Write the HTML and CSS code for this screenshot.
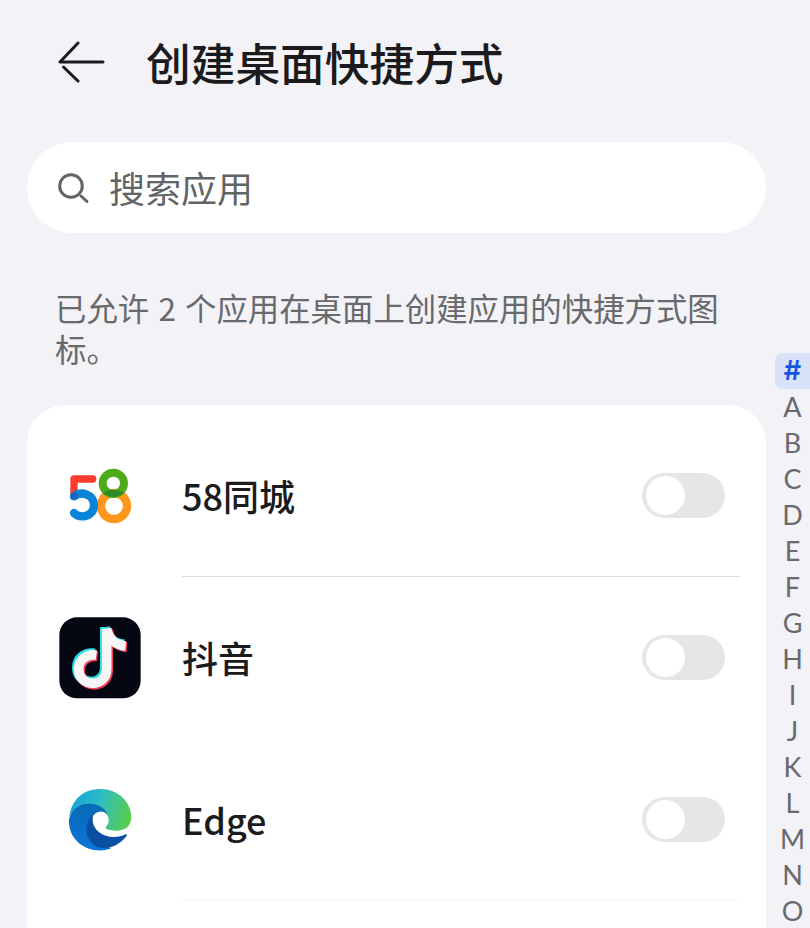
FILE: index.html
```
<!DOCTYPE html>
<html lang="zh-CN">
<head>
    <meta charset="UTF-8">
    <meta name="viewport" content="width=device-width, initial-scale=1.0">
    <title>创建桌面快捷方式</title>
    <link rel="stylesheet" href="styles.css">
</head>
<body>
    <div class="page">
        <div class="header">
            <svg class="back" viewBox="0 0 48 44" width="48" height="44">
                <path d="M20 2 L2 21 H45 M5.5 26 L20 40"/>
            </svg>
            <h1>创建桌面快捷方式</h1>
        </div>

        <div class="search">
            <svg class="search-icon" viewBox="0 0 34 34" width="34" height="34">
                <circle cx="13" cy="15" r="11.3"/>
                <path d="M23 25 L29 30.5"/>
            </svg>
            <span>搜索应用</span>
        </div>

        <p class="tip">已允许 2 个应用在桌面上创建应用的快捷方式图标。</p>

        <div class="card">
            <div class="row">
                <svg class="icon" viewBox="27 0 246 246">
                    <path d="M128 72 H72 V124" fill="none" stroke="#fb3b30" stroke-width="22" stroke-linecap="round" stroke-linejoin="round"/>
                    <circle cx="192" cy="153" r="39" fill="none" stroke="#ff971c" stroke-width="25"/>
                    <circle cx="190" cy="85" r="32" fill="none" stroke="#4caa1b" stroke-width="24"/>
                    <path d="M158 113 Q190 95 222 113 Q190 137 158 113Z" fill="#2d8a2b"/>
                    <path d="M72 124 C94 107 132 118 132 151 C132 185 91 192 72 174" fill="none" stroke="#0b83d9" stroke-width="25" stroke-linecap="round"/>
                    <circle cx="73" cy="122" r="11" fill="#2164bd"/>
                </svg>
                <span class="name">58同城</span>
                <div class="switch"></div>
            </div>
            <div class="row">
                <svg class="icon" viewBox="27 27 246 246">
                    <rect x="28" y="28" width="244" height="243" rx="53" fill="#050713"/>
                    <g fill="none" stroke-width="30">
                        <path d="M168 60 V181 C168 239 84 237 84 182 C84 153 108 135 137 139 M168 60 C173 89 194 109 225 112" stroke="#28dfe4" transform="translate(-3 -3)"/>
                        <path d="M168 60 V181 C168 239 84 237 84 182 C84 153 108 135 137 139 M168 60 C173 89 194 109 225 112" stroke="#f43c58" transform="translate(6 6)"/>
                        <path d="M168 60 V181 C168 239 84 237 84 182 C84 153 108 135 137 139 M168 60 C173 89 194 109 225 112" stroke="#f7f5f6" stroke-width="29" transform="translate(2 2)"/>
                    </g>
                </svg>
                <span class="name">抖音</span>
                <div class="switch"></div>
            </div>
            <div class="row">
                <svg class="icon" viewBox="27 12 246 246">
                    <defs>
                        <linearGradient id="edgeTop" x1="60" y1="80" x2="240" y2="130" gradientUnits="userSpaceOnUse">
                            <stop offset="0" stop-color="#16a3d9"/>
                            <stop offset=".45" stop-color="#2dbcc5"/>
                            <stop offset="1" stop-color="#5bce4a"/>
                        </linearGradient>
                        <linearGradient id="edgeLeft" x1="90" y1="85" x2="100" y2="220" gradientUnits="userSpaceOnUse">
                            <stop offset="0" stop-color="#0869b5"/>
                            <stop offset="1" stop-color="#0b76d7"/>
                        </linearGradient>
                    </defs>
                    <path d="M58 125 C65 72 102 42 151 42 C205 42 244 81 244 127 C244 156 222 168 198 167 C180 166 167 163 167 159 C167 153 176 150 176 136 C176 119 165 109 150 107 C120 78 79 89 58 125Z" fill="url(#edgeTop)"/>
                    <path d="M57 133 C64 104 88 86 116 86 C145 86 168 100 174 122 C167 111 158 109 149 110 C132 112 123 129 122 145 C121 183 145 213 184 220 C125 243 53 204 57 133Z" fill="url(#edgeLeft)"/>
                    <path d="M128 120 C100 145 102 196 142 216 C176 228 213 206 230 182 C232 178 228 177 224 179 C176 199 130 171 128 137Z" fill="#0b4fa3"/>
                </svg>
                <span class="name">Edge</span>
                <div class="switch"></div>
            </div>
        </div>
    </div>

    <div class="letters">
        <span class="active">#</span>
        <span>A</span>
        <span>B</span>
        <span>C</span>
        <span>D</span>
        <span>E</span>
        <span>F</span>
        <span>G</span>
        <span>H</span>
        <span>I</span>
        <span>J</span>
        <span>K</span>
        <span>L</span>
        <span>M</span>
        <span>N</span>
        <span>O</span>
    </div>
</body>
</html>
```
FILE: styles.css
```
* {
    box-sizing: border-box;
}

body {
    margin: 0;
    height: 928px;
    overflow: hidden;
    display: flex;
    background-color: #f2f2f7;
    color: #1b1b1d;
    font-family: "Noto Sans CJK SC", sans-serif;
}

.page {
    width: 766px;
    padding-left: 27px;
    flex-shrink: 0;
}

.header {
    display: flex;
    align-items: center;
    height: 126px;
    padding-left: 31px;
}

.back {
    fill: none;
    stroke: #1b1b1d;
    stroke-width: 3;
    stroke-linecap: round;
    stroke-linejoin: round;
}

h1 {
    margin: 0 0 3px 40px;
    font-size: 44.7px;
    font-weight: 500;
    line-height: 60px;
}

.search {
    display: flex;
    align-items: center;
    gap: 17px;
    height: 91px;
    margin-top: 16px;
    padding-left: 31px;
    border-radius: 46px;
    background-color: #fff;
    color: #626366;
    font-size: 36px;
    line-height: 50px;
}

.search-icon {
    fill: none;
    stroke: #626366;
    stroke-width: 3;
    stroke-linecap: round;
}

.search span {
    margin-bottom: 2px;
}

.tip {
    height: 82px;
    margin: 54px 40px 36px 28px;
    color: #68696d;
    font-size: 31.4px;
    line-height: 41px;
    word-spacing: 2.2px;
}

.card {
    height: 523px;
    padding: 10px 26px 0 32px;
    border-radius: 38px 38px 0 0;
    background-color: #fff;
}

.row {
    position: relative;
    display: flex;
    align-items: center;
    height: 162px;
    padding-right: 15px;
}

/* divider starts under the app name */
.row:nth-child(1)::after,
.row:nth-child(3)::after {
    content: "";
    position: absolute;
    left: 123px;
    right: 0;
    bottom: 0;
    height: 1px;
    background-color: #dcdcde;
}

.row:nth-child(3)::after {
    background-color: #f6f6f7;
}

.icon {
    width: 82px;
    height: 82px;
}

.name {
    flex: 1;
    margin: 0 0 2px 41px;
    font-size: 36px;
    font-weight: 500;
    line-height: 50px;
}

.switch {
    width: 83px;
    height: 45px;
    margin-bottom: 1px;
    padding: 3px 4px;
    border-radius: 23px;
    background-color: #e7e5e8;
}

.switch::before {
    content: "";
    display: block;
    width: 39px;
    height: 39px;
    border-radius: 50%;
    background-color: #fff;
}

.letters {
    width: 35px;
    margin-left: 9px;
    padding-top: 353px;
    flex-shrink: 0;
    color: #68696d;
    font-family: Lato, sans-serif;
    font-size: 27px;
    text-align: center;
}

.letters span {
    display: block;
    height: 36px;
    line-height: 35px;
}

.letters .active {
    border-radius: 8px 0 0 8px;
    background-color: #d8e2f8;
    color: #1456e0;
    font-family: Inter, sans-serif;
    font-weight: 600;
}
```
